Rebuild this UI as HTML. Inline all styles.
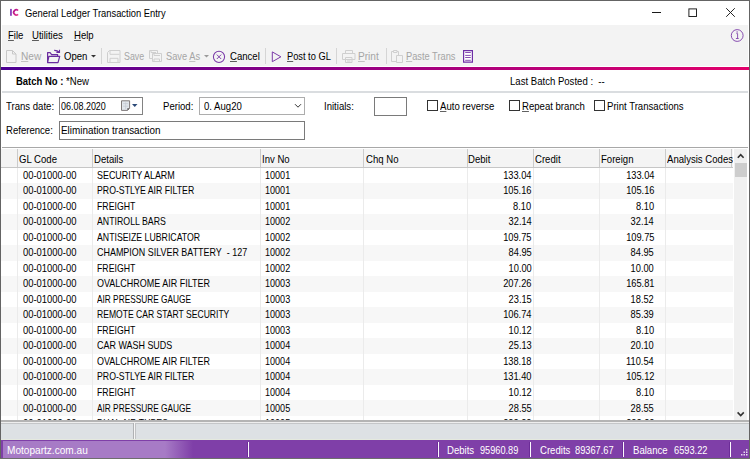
<!DOCTYPE html>
<html><head><meta charset="utf-8">
<style>
*{margin:0;padding:0;box-sizing:border-box}
html,body{width:750px;height:459px;overflow:hidden;background:#fff}
body{font-family:"Liberation Sans",sans-serif;font-size:10.3px;color:#000;position:relative}
.a{position:absolute}
.t{position:absolute;white-space:nowrap;line-height:12px;transform:scaleX(0.93);transform-origin:0 0}
.r{transform-origin:100% 0}
u{text-decoration:underline;text-underline-offset:0.5px;text-decoration-thickness:1px;text-decoration-color:color-mix(in srgb,currentColor 62%,transparent)}
</style></head><body>
<div class="a" style="left:0px;top:0px;width:750px;height:459px;border:1px solid #646464;border-bottom:none"></div>
<svg class="a" style="left:8px;top:7px" width="14" height="12" viewBox="0 0 14 12"><defs><linearGradient id="icg" x1="0" y1="0" x2="1" y2="1"><stop offset="0" stop-color="#b0108a"/><stop offset="1" stop-color="#e83a8c"/></linearGradient></defs><rect x="2.1" y="1.9" width="1.7" height="6.9" fill="#8236b8"/><path d="M10.1 3.5A2.6 2.6 0 1 0 10.1 7.3" fill="none" stroke="url(#icg)" stroke-width="1.7"/></svg>
<div class="t" style="left:25px;top:7.999999999999999px;transform:scaleX(.91)">General Ledger Transaction Entry</div>
<div class="a" style="left:651.5px;top:11.7px;width:9px;height:0.9px;background:#1a1a1a"></div>
<svg class="a" style="left:688px;top:8px" width="10" height="10" viewBox="0 0 10 10"><rect x="0.9" y="0.9" width="7.6" height="7.6" fill="none" stroke="#1a1a1a" stroke-width="0.95"/></svg>
<svg class="a" style="left:725px;top:7px" width="11" height="11" viewBox="0 0 11 11"><path d="M1.2 1.2L9.8 9.8M9.8 1.2L1.2 9.8" stroke="#1a1a1a" stroke-width="0.95"/></svg>
<div class="a" style="left:2px;top:25px;width:746px;height:40.6px;background:#f3f3f3"></div>
<div class="t" style="left:7.5px;top:29.8px;"><u>F</u>ile</div>
<div class="t" style="left:32px;top:29.8px;"><u>U</u>tilities</div>
<div class="t" style="left:74px;top:29.8px;"><u>H</u>elp</div>
<svg class="a" style="left:730px;top:28px" width="15" height="15" viewBox="0 0 15 15"><circle cx="7.2" cy="7.5" r="5.9" fill="none" stroke="#7a3aa8" stroke-width="0.9"/><path d="M6.4 5.6h1.2v4.8M5.9 10.5h2.8" fill="none" stroke="#7a3aa8" stroke-width=".85"/><circle cx="7.1" cy="4" r=".65" fill="#7a3aa8"/></svg>
<svg class="a" style="left:6px;top:50px" width="11" height="14" viewBox="0 0 11 14"><path d="M.5 .5H6.5L10 4V12.5H.5Z M6.5 .5V4H10" fill="none" stroke="#c8c8c8"/></svg>
<div class="t" style="left:20.5px;top:50.8px;color:#a5a5a5;transform:scaleX(.98)"><u>N</u>ew</div>
<svg class="a" style="left:44px;top:47px" width="18" height="18" viewBox="0 0 18 18"><path d="M3.6 15.6V5.6H6.1L7.6 7.6H13.6V9.2 M3.6 15.6H14L15.7 9.4H4.9Z" fill="none" stroke="#6a2d9f" stroke-width="1.2" stroke-linejoin="round"/><path d="M10.2 3.4Q13.4 3.3 15.2 5.2 M12.4 5.4H15.5V2.7" fill="none" stroke="#6a2d9f" stroke-width="1.1"/></svg>
<div class="t" style="left:63.5px;top:50.8px;">Open</div>
<svg class="a" style="left:91px;top:55px" width="6" height="3" viewBox="0 0 6 3"><path d="M0 0H5L2.5 2.6Z" fill="#333"/></svg>
<div class="a" style="left:101px;top:48px;width:1px;height:16px;background:#d5d5d5"></div>
<svg class="a" style="left:107px;top:50px" width="14" height="13" viewBox="0 0 14 13"><path d="M2.5 .5H13V12.5H.5V2.5Z M3 .5V4.3H12.5 M3 12.5V8.3H11V12.5" fill="none" stroke="#cfcfcf"/></svg>
<div class="t" style="left:124px;top:50.8px;color:#a5a5a5;transform:scaleX(.86)">Save</div>
<svg class="a" style="left:149px;top:50px" width="14" height="13" viewBox="0 0 14 13"><path d="M.5 .5H8.5V3 M3.5 8.5H.5V.5 M2 .5V2.5H7 M3.5 3.5H12.5V11.5H3.5Z M5 3.5V5.5H11 M5 11.5V9H10.5V11.5" fill="none" stroke="#cfcfcf"/></svg>
<div class="t" style="left:166px;top:50.8px;color:#a5a5a5;transform:scaleX(.9)">Save <u>A</u>s</div>
<svg class="a" style="left:203.5px;top:55px" width="6" height="3" viewBox="0 0 6 3"><path d="M0 0H5L2.5 2.6Z" fill="#9a9a9a"/></svg>
<svg class="a" style="left:212px;top:50px" width="14" height="14" viewBox="0 0 14 14"><circle cx="7" cy="6.8" r="5.6" fill="none" stroke="#7a3aa8" stroke-width="1.05"/><path d="M4.8 4.6L9.2 9M9.2 4.6L4.8 9" stroke="#7a3aa8" stroke-width=".95"/></svg>
<div class="t" style="left:229.5px;top:50.8px;"><u>C</u>ancel</div>
<div class="a" style="left:265px;top:48px;width:1px;height:16px;background:#d5d5d5"></div>
<svg class="a" style="left:271px;top:51px" width="11" height="12" viewBox="0 0 11 12"><path d="M1.3 .9V10.7L9.9 5.8Z" fill="none" stroke="#7a3aa8" stroke-width="1" stroke-linejoin="round"/></svg>
<div class="t" style="left:287px;top:50.8px;transform:scaleX(.9)"><u>P</u>ost to GL</div>
<div class="a" style="left:336px;top:48px;width:1px;height:16px;background:#d5d5d5"></div>
<svg class="a" style="left:342px;top:50px" width="14" height="13" viewBox="0 0 14 13"><path d="M3.5 3V.5H10.5V3 M.5 3.5H13V9.5H.5Z M3.5 7.5H10V12.5H3.5Z M5 9.5H8.5M5 11H8.5" fill="none" stroke="#cfcfcf"/></svg>
<div class="t" style="left:358px;top:50.8px;color:#a5a5a5;transform:scaleX(.98)"><u>P</u>rint</div>
<div class="a" style="left:385.5px;top:48px;width:1px;height:16px;background:#d5d5d5"></div>
<svg class="a" style="left:391px;top:50px" width="13" height="13" viewBox="0 0 13 13"><path d="M.5 1.5H2.5M6 1.5H7.5V5.5 M.5 1.5V11.5H5.5 M2.5 .5H6V2.5H2.5Z M5.5 5.5H11.5V12.5H5.5Z" fill="none" stroke="#cfcfcf"/></svg>
<div class="t" style="left:406px;top:50.8px;color:#a5a5a5;transform:scaleX(.9)"><u>P</u>aste Trans</div>
<svg class="a" style="left:461.5px;top:49px" width="12" height="15" viewBox="0 0 12 15"><path d="M1.6 1.6H10.4V13.2H1.6Z" fill="#fff" stroke="#6e2ea6" stroke-width="1.2"/><path d="M3.2 3.5H8.8M3.2 6.4H8.8M3.2 8.5H8.8M3.2 11.3H8.8" stroke="#7a3aa8" stroke-width=".9"/></svg>
<div class="a" style="left:1px;top:67px;width:748px;height:2.6px;background:linear-gradient(90deg,#4b0092 0%,#9b0082 50%,#e2006a 100%)"></div>
<div class="t" style="left:15.5px;top:76.3px;font-weight:bold;transform:scaleX(.92)">Batch No :</div>
<div class="t" style="left:65.5px;top:76.3px;">*New</div>
<div class="t" style="left:509.5px;top:76.3px;">Last Batch Posted :&nbsp; --</div>
<div class="a" style="left:2px;top:91.2px;width:746px;height:1.6px;background:#dadde0"></div>
<div class="t" style="left:6px;top:100.8px;">Trans date:</div>
<div class="a" style="left:59px;top:97px;width:84px;height:17.5px;border:1px solid #828282;background:#fff"></div>
<div class="t" style="left:60.5px;top:100.8px;transform:scaleX(.87)">06.08.2020</div>
<svg class="a" style="left:120px;top:100px" width="20" height="11" viewBox="0 0 20 11"><path d="M1.5 .8H9.6V8.4L7.6 10.4H1.5Z" fill="#e2e6ec" stroke="#7a7474" stroke-width=".95"/><path d="M7.4 10.2V8.2H9.4Z" fill="#4a4646"/><path d="M3 3.6H8.2M3 6.2H8.2M5.6 2.4V9.2" stroke="#c4cad3" stroke-width=".7"/><path d="M12 4H17.5L14.75 7Z" fill="#2b4a78"/></svg>
<div class="t" style="left:163px;top:100.8px;">Period:</div>
<div class="a" style="left:199px;top:97px;width:106px;height:18px;border:1px solid #adadad;background:#fff"></div>
<div class="t" style="left:204px;top:100.8px;">0. Aug20</div>
<svg class="a" style="left:294px;top:103px" width="8" height="6" viewBox="0 0 8 6"><path d="M1 1.2L4 4.2L7 1.2" fill="none" stroke="#333" stroke-width="1"/></svg>
<div class="t" style="left:324px;top:100.8px;">Initials:</div>
<div class="a" style="left:374px;top:97px;width:33px;height:19px;border:1px solid #7a7a7a;background:#fff"></div>
<div class="a" style="left:426.5px;top:100px;width:11px;height:11px;border:1px solid #333;background:#fff"></div>
<div class="t" style="left:440.0px;top:100.8px;"><u>A</u>uto reverse</div>
<div class="a" style="left:508.5px;top:100px;width:11px;height:11px;border:1px solid #333;background:#fff"></div>
<div class="t" style="left:522.0px;top:100.8px;"><u>R</u>epeat branch</div>
<div class="a" style="left:593.5px;top:100px;width:11px;height:11px;border:1px solid #333;background:#fff"></div>
<div class="t" style="left:607.0px;top:100.8px;">Print Transactions</div>
<div class="t" style="left:6px;top:124.8px;">Reference:</div>
<div class="a" style="left:58.5px;top:121px;width:246.5px;height:18.5px;border:1px solid #7a7a7a;background:#fff"></div>
<div class="t" style="left:61px;top:124.8px;transform:scaleX(.96)">Elimination transaction</div>
<div class="a" style="left:2px;top:147px;width:746px;height:1px;background:#a8a8a8"></div>
<div class="a" style="left:1px;top:148px;width:732px;height:273px;overflow:hidden">
<div class="a" style="left:0px;top:0px;width:732px;height:19.5px;background:#f4f4f4;border-bottom:1px solid #c6c6c6;border-top:1px solid #fff"></div>
<div class="a" style="left:15.5px;top:1px;width:1.3px;height:18px;background:#cbcbcb"></div>
<div class="a" style="left:90.5px;top:1px;width:1.3px;height:18px;background:#cbcbcb"></div>
<div class="a" style="left:258.5px;top:1px;width:1.3px;height:18px;background:#cbcbcb"></div>
<div class="a" style="left:362px;top:1px;width:1.3px;height:18px;background:#cbcbcb"></div>
<div class="a" style="left:465.5px;top:1px;width:1.3px;height:18px;background:#cbcbcb"></div>
<div class="a" style="left:531.5px;top:1px;width:1.3px;height:18px;background:#cbcbcb"></div>
<div class="a" style="left:598px;top:1px;width:1.3px;height:18px;background:#cbcbcb"></div>
<div class="a" style="left:664px;top:1px;width:1.3px;height:18px;background:#cbcbcb"></div>
<div class="a" style="left:730px;top:1px;width:1.3px;height:18px;background:#cbcbcb"></div>
<div class="t" style="left:18.2px;top:6.3px;">GL Code</div>
<div class="t" style="left:92.7px;top:6.3px;">Details</div>
<div class="t" style="left:261.2px;top:6.3px;">Inv No</div>
<div class="t" style="left:364.7px;top:6.3px;">Chq No</div>
<div class="t" style="left:467.2px;top:6.3px;">Debit</div>
<div class="t" style="left:534.2px;top:6.3px;">Credit</div>
<div class="t" style="left:599.7px;top:6.3px;">Foreign</div>
<div class="t" style="left:666.2px;top:6.3px;">Analysis Codes</div>
<div class="a" style="left:0px;top:19.5px;width:732px;height:15.53px;background:#fff"></div>
<div class="a" style="left:0px;top:35.03px;width:732px;height:15.53px;background:#f7f7f7"></div>
<div class="a" style="left:0px;top:50.56px;width:732px;height:15.53px;background:#fff"></div>
<div class="a" style="left:0px;top:66.09px;width:732px;height:15.53px;background:#f7f7f7"></div>
<div class="a" style="left:0px;top:81.62px;width:732px;height:15.53px;background:#fff"></div>
<div class="a" style="left:0px;top:97.15px;width:732px;height:15.53px;background:#f7f7f7"></div>
<div class="a" style="left:0px;top:112.68px;width:732px;height:15.53px;background:#fff"></div>
<div class="a" style="left:0px;top:128.21px;width:732px;height:15.53px;background:#f7f7f7"></div>
<div class="a" style="left:0px;top:143.74px;width:732px;height:15.53px;background:#fff"></div>
<div class="a" style="left:0px;top:159.27px;width:732px;height:15.53px;background:#f7f7f7"></div>
<div class="a" style="left:0px;top:174.8px;width:732px;height:15.53px;background:#fff"></div>
<div class="a" style="left:0px;top:190.33px;width:732px;height:15.53px;background:#f7f7f7"></div>
<div class="a" style="left:0px;top:205.86px;width:732px;height:15.53px;background:#fff"></div>
<div class="a" style="left:0px;top:221.39px;width:732px;height:15.53px;background:#f7f7f7"></div>
<div class="a" style="left:0px;top:236.92px;width:732px;height:15.53px;background:#fff"></div>
<div class="a" style="left:0px;top:252.45px;width:732px;height:15.53px;background:#f7f7f7"></div>
<div class="a" style="left:0px;top:267.98px;width:732px;height:15.53px;background:#fff"></div>
<div class="a" style="left:15.5px;top:19.5px;width:1px;height:260px;background:#ebebeb"></div>
<div class="a" style="left:90.5px;top:19.5px;width:1px;height:260px;background:#ebebeb"></div>
<div class="a" style="left:258.5px;top:19.5px;width:1px;height:260px;background:#ebebeb"></div>
<div class="a" style="left:362px;top:19.5px;width:1px;height:260px;background:#ebebeb"></div>
<div class="a" style="left:465.5px;top:19.5px;width:1px;height:260px;background:#ebebeb"></div>
<div class="a" style="left:531.5px;top:19.5px;width:1px;height:260px;background:#ebebeb"></div>
<div class="a" style="left:598px;top:19.5px;width:1px;height:260px;background:#ebebeb"></div>
<div class="a" style="left:664px;top:19.5px;width:1px;height:260px;background:#ebebeb"></div>
<div class="t" style="left:22px;top:21.6px;transform:scaleX(.915)">00-01000-00</div>
<div class="t" style="left:96px;top:21.6px;transform:scaleX(0.867)">SECURITY ALARM</div>
<div class="t" style="left:264.3px;top:21.6px;transform:scaleX(.88)">10001</div>
<div class="t r" style="right:201.5px;top:21.6px;transform:scaleX(.9)">133.04</div>
<div class="t r" style="right:79.0px;top:21.6px;transform:scaleX(.9)">133.04</div>
<div class="t" style="left:22px;top:37.13px;transform:scaleX(.915)">00-01000-00</div>
<div class="t" style="left:96px;top:37.13px;transform:scaleX(0.848)">PRO-STLYE AIR FILTER</div>
<div class="t" style="left:264.3px;top:37.13px;transform:scaleX(.88)">10001</div>
<div class="t r" style="right:201.5px;top:37.13px;transform:scaleX(.9)">105.16</div>
<div class="t r" style="right:79.0px;top:37.13px;transform:scaleX(.9)">105.16</div>
<div class="t" style="left:22px;top:52.66px;transform:scaleX(.915)">00-01000-00</div>
<div class="t" style="left:96px;top:52.66px;transform:scaleX(0.848)">FREIGHT</div>
<div class="t" style="left:264.3px;top:52.66px;transform:scaleX(.88)">10001</div>
<div class="t r" style="right:201.5px;top:52.66px;transform:scaleX(.9)">8.10</div>
<div class="t r" style="right:79.0px;top:52.66px;transform:scaleX(.9)">8.10</div>
<div class="t" style="left:22px;top:68.19px;transform:scaleX(.915)">00-01000-00</div>
<div class="t" style="left:96px;top:68.19px;transform:scaleX(0.852)">ANTIROLL BARS</div>
<div class="t" style="left:264.3px;top:68.19px;transform:scaleX(.88)">10002</div>
<div class="t r" style="right:201.5px;top:68.19px;transform:scaleX(.9)">32.14</div>
<div class="t r" style="right:79.0px;top:68.19px;transform:scaleX(.9)">32.14</div>
<div class="t" style="left:22px;top:83.72px;transform:scaleX(.915)">00-01000-00</div>
<div class="t" style="left:96px;top:83.72px;transform:scaleX(0.849)">ANTISEIZE LUBRICATOR</div>
<div class="t" style="left:264.3px;top:83.72px;transform:scaleX(.88)">10002</div>
<div class="t r" style="right:201.5px;top:83.72px;transform:scaleX(.9)">109.75</div>
<div class="t r" style="right:79.0px;top:83.72px;transform:scaleX(.9)">109.75</div>
<div class="t" style="left:22px;top:99.25px;transform:scaleX(.915)">00-01000-00</div>
<div class="t" style="left:96px;top:99.25px;transform:scaleX(0.869)">CHAMPION SILVER BATTERY&nbsp; - 127</div>
<div class="t" style="left:264.3px;top:99.25px;transform:scaleX(.88)">10002</div>
<div class="t r" style="right:201.5px;top:99.25px;transform:scaleX(.9)">84.95</div>
<div class="t r" style="right:79.0px;top:99.25px;transform:scaleX(.9)">84.95</div>
<div class="t" style="left:22px;top:114.78px;transform:scaleX(.915)">00-01000-00</div>
<div class="t" style="left:96px;top:114.78px;transform:scaleX(0.848)">FREIGHT</div>
<div class="t" style="left:264.3px;top:114.78px;transform:scaleX(.88)">10002</div>
<div class="t r" style="right:201.5px;top:114.78px;transform:scaleX(.9)">10.00</div>
<div class="t r" style="right:79.0px;top:114.78px;transform:scaleX(.9)">10.00</div>
<div class="t" style="left:22px;top:130.31px;transform:scaleX(.915)">00-01000-00</div>
<div class="t" style="left:96px;top:130.31px;transform:scaleX(0.872)">OVALCHROME AIR FILTER</div>
<div class="t" style="left:264.3px;top:130.31px;transform:scaleX(.88)">10003</div>
<div class="t r" style="right:201.5px;top:130.31px;transform:scaleX(.9)">207.26</div>
<div class="t r" style="right:79.0px;top:130.31px;transform:scaleX(.9)">165.81</div>
<div class="t" style="left:22px;top:145.84px;transform:scaleX(.915)">00-01000-00</div>
<div class="t" style="left:96px;top:145.84px;transform:scaleX(0.805)">AIR PRESSURE GAUGE</div>
<div class="t" style="left:264.3px;top:145.84px;transform:scaleX(.88)">10003</div>
<div class="t r" style="right:201.5px;top:145.84px;transform:scaleX(.9)">23.15</div>
<div class="t r" style="right:79.0px;top:145.84px;transform:scaleX(.9)">18.52</div>
<div class="t" style="left:22px;top:161.37px;transform:scaleX(.915)">00-01000-00</div>
<div class="t" style="left:96px;top:161.37px;transform:scaleX(0.832)">REMOTE CAR START SECURITY</div>
<div class="t" style="left:264.3px;top:161.37px;transform:scaleX(.88)">10003</div>
<div class="t r" style="right:201.5px;top:161.37px;transform:scaleX(.9)">106.74</div>
<div class="t r" style="right:79.0px;top:161.37px;transform:scaleX(.9)">85.39</div>
<div class="t" style="left:22px;top:176.9px;transform:scaleX(.915)">00-01000-00</div>
<div class="t" style="left:96px;top:176.9px;transform:scaleX(0.848)">FREIGHT</div>
<div class="t" style="left:264.3px;top:176.9px;transform:scaleX(.88)">10003</div>
<div class="t r" style="right:201.5px;top:176.9px;transform:scaleX(.9)">10.12</div>
<div class="t r" style="right:79.0px;top:176.9px;transform:scaleX(.9)">8.10</div>
<div class="t" style="left:22px;top:192.43px;transform:scaleX(.915)">00-01000-00</div>
<div class="t" style="left:96px;top:192.43px;transform:scaleX(0.869)">CAR WASH SUDS</div>
<div class="t" style="left:264.3px;top:192.43px;transform:scaleX(.88)">10004</div>
<div class="t r" style="right:201.5px;top:192.43px;transform:scaleX(.9)">25.13</div>
<div class="t r" style="right:79.0px;top:192.43px;transform:scaleX(.9)">20.10</div>
<div class="t" style="left:22px;top:207.96px;transform:scaleX(.915)">00-01000-00</div>
<div class="t" style="left:96px;top:207.96px;transform:scaleX(0.872)">OVALCHROME AIR FILTER</div>
<div class="t" style="left:264.3px;top:207.96px;transform:scaleX(.88)">10004</div>
<div class="t r" style="right:201.5px;top:207.96px;transform:scaleX(.9)">138.18</div>
<div class="t r" style="right:79.0px;top:207.96px;transform:scaleX(.9)">110.54</div>
<div class="t" style="left:22px;top:223.49px;transform:scaleX(.915)">00-01000-00</div>
<div class="t" style="left:96px;top:223.49px;transform:scaleX(0.848)">PRO-STLYE AIR FILTER</div>
<div class="t" style="left:264.3px;top:223.49px;transform:scaleX(.88)">10004</div>
<div class="t r" style="right:201.5px;top:223.49px;transform:scaleX(.9)">131.40</div>
<div class="t r" style="right:79.0px;top:223.49px;transform:scaleX(.9)">105.12</div>
<div class="t" style="left:22px;top:239.02px;transform:scaleX(.915)">00-01000-00</div>
<div class="t" style="left:96px;top:239.02px;transform:scaleX(0.848)">FREIGHT</div>
<div class="t" style="left:264.3px;top:239.02px;transform:scaleX(.88)">10004</div>
<div class="t r" style="right:201.5px;top:239.02px;transform:scaleX(.9)">10.12</div>
<div class="t r" style="right:79.0px;top:239.02px;transform:scaleX(.9)">8.10</div>
<div class="t" style="left:22px;top:254.55px;transform:scaleX(.915)">00-01000-00</div>
<div class="t" style="left:96px;top:254.55px;transform:scaleX(0.805)">AIR PRESSURE GAUGE</div>
<div class="t" style="left:264.3px;top:254.55px;transform:scaleX(.88)">10005</div>
<div class="t r" style="right:201.5px;top:254.55px;transform:scaleX(.9)">28.55</div>
<div class="t r" style="right:79.0px;top:254.55px;transform:scaleX(.9)">28.55</div>
<div class="t" style="left:22px;top:270.08px;transform:scaleX(.915)">00-01000-00</div>
<div class="t" style="left:96px;top:270.08px;transform:scaleX(0.85)">DUAL AIR TUBES</div>
<div class="t" style="left:264.3px;top:270.08px;transform:scaleX(.88)">10005</div>
<div class="t r" style="right:201.5px;top:270.08px;transform:scaleX(.9)">222.22</div>
<div class="t r" style="right:79.0px;top:270.08px;transform:scaleX(.9)">222.22</div>
</div>
<div class="a" style="left:733px;top:148px;width:15px;height:273px;background:#fff"></div>
<div class="a" style="left:734px;top:149px;width:13px;height:271px;background:#f0f0f0"></div>
<svg class="a" style="left:734px;top:150px" width="13" height="12" viewBox="0 0 13 12"><path d="M3.8 7.8L6.7 4.7L9.6 7.8" fill="none" stroke="#333" stroke-width="1.6"/></svg>
<div class="a" style="left:734.5px;top:163px;width:12px;height:14px;background:#cdcdcd"></div>
<svg class="a" style="left:734px;top:408px" width="13" height="12" viewBox="0 0 13 12"><path d="M3.6 4.4L6.7 7.5L9.8 4.4" fill="none" stroke="#333" stroke-width="1.6"/></svg>
<div class="a" style="left:1px;top:420px;width:748px;height:20px;background:#dde1e4"></div>
<div class="a" style="left:1px;top:420.3px;width:748px;height:1.4px;background:#b4b4b4"></div>
<div class="a" style="left:1px;top:421.7px;width:748px;height:1.3px;background:#eeeeee"></div>
<div class="a" style="left:1px;top:423px;width:748px;height:1px;background:#c4c6c8"></div>
<div class="a" style="left:1px;top:438.8px;width:748px;height:1.2px;background:#e4e9de"></div>
<div class="a" style="left:132.5px;top:423px;width:1px;height:16px;background:#b0b2b4"></div>
<div class="a" style="left:133.5px;top:423px;width:1.5px;height:16px;background:#f6f6f6"></div>
<div class="a" style="left:135px;top:423px;width:1px;height:16px;background:#c0c2c4"></div>
<div class="a" style="left:1px;top:440px;width:748px;height:18px;background:linear-gradient(90deg,#a77bc6 0px,#a77bc6 164px,#7f3fa8 192px,#7f3fa8 100%)"></div>
<div class="a" style="left:1px;top:440px;width:748px;height:1.2px;background:#7f3fa8"></div>
<div class="a" style="left:1px;top:440px;width:1.5px;height:18px;background:#7f3fa8"></div>
<div class="a" style="left:0px;top:458px;width:750px;height:1px;background:#6e6e6e"></div>
<div class="t" style="left:6.5px;top:445.3px;color:#fff;transform:scaleX(.98)">Motopartz.com.au</div>
<div class="a" style="left:247px;top:442px;width:1px;height:15px;background:#6c2c98"></div>
<div class="a" style="left:248px;top:442.3px;width:1.2px;height:14.4px;background:#fbf8fd"></div>
<div class="a" style="left:437px;top:442px;width:1px;height:15px;background:#6c2c98"></div>
<div class="a" style="left:438px;top:442.3px;width:1.2px;height:14.4px;background:#fbf8fd"></div>
<div class="a" style="left:529px;top:442px;width:1px;height:15px;background:#6c2c98"></div>
<div class="a" style="left:530px;top:442.3px;width:1.2px;height:14.4px;background:#fbf8fd"></div>
<div class="a" style="left:622px;top:442px;width:1px;height:15px;background:#6c2c98"></div>
<div class="a" style="left:623px;top:442.3px;width:1.2px;height:14.4px;background:#fbf8fd"></div>
<div class="a" style="left:729px;top:442px;width:1px;height:15px;background:#6c2c98"></div>
<div class="a" style="left:730px;top:442.3px;width:1.2px;height:14.4px;background:#fbf8fd"></div>
<svg class="a" style="left:740px;top:448px" width="9" height="9" viewBox="0 0 9 9"><g fill="#e8dcf0"><rect x="6" y="1" width="1.5" height="1.5"/><rect x="3.5" y="3.5" width="1.5" height="1.5"/><rect x="6" y="3.5" width="1.5" height="1.5"/><rect x="1" y="6" width="1.5" height="1.5"/><rect x="3.5" y="6" width="1.5" height="1.5"/><rect x="6" y="6" width="1.5" height="1.5"/></g></svg>
<div class="t" style="left:447px;top:445.3px;color:#fff;transform:scaleX(0.93)">Debits</div>
<div class="t" style="left:480px;top:445.3px;color:#fff;transform:scaleX(0.89)">95960.89</div>
<div class="t" style="left:539.5px;top:445.3px;color:#fff;transform:scaleX(0.93)">Credits</div>
<div class="t" style="left:574.5px;top:445.3px;color:#fff;transform:scaleX(0.9)">89367.67</div>
<div class="t" style="left:632.5px;top:445.3px;color:#fff;transform:scaleX(0.93)">Balance</div>
<div class="t" style="left:674px;top:445.3px;color:#fff;transform:scaleX(0.9)">6593.22</div>
</body></html>
